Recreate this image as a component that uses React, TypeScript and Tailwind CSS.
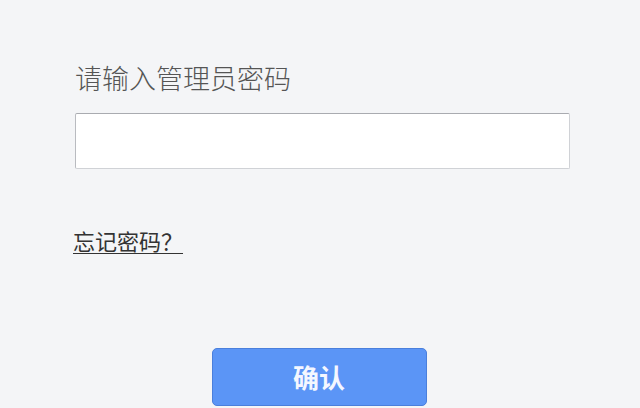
export default function App() {
  return (
    <div
      className="w-[640px] h-[408px] overflow-hidden bg-[#f4f5f7]"
      style={{ fontFamily: '"Noto Sans CJK SC", "Noto Sans", sans-serif' }}
    >
      <div className="pl-[75px] pt-[64px]">
        <p className="text-[27px] leading-none font-light text-[#555]">
          请输入管理员密码
        </p>
        <input
          type="password"
          className="mt-[22px] block w-[495px] h-[56px] bg-white border border-[#d0d2d6] border-t-[#a9abb0] border-l-[#b9bbc0] rounded-[2px] outline-none"
        />
        <a
          href="#"
          className="mt-[60px] inline-block text-[22px] leading-none text-[#333] underline underline-offset-[3px] decoration-1 -ml-[2px]"
        >
          忘记密码？
        </a>
      </div>
      <div className="flex justify-center pt-[93px] pr-[2px]">
        <button className="w-[215px] h-[58px] rounded-[5px] bg-[#5b95f6] border border-[#4a7fdc] text-[#f4f7ff] text-[26px] font-semibold leading-none">
          确认
        </button>
      </div>
    </div>
  )
}
